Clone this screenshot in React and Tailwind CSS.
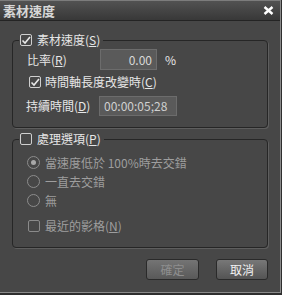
import React from 'react';

const Check = ({ checked, dim }) => (
  <span
    className={`flex h-[12px] w-[12px] shrink-0 items-center justify-center rounded-[2px] border ${
      dim ? 'border-[#8a8a8a]' : 'border-[#cfcfcf]'
    }`}
  >
    {checked && (
      <svg width="10" height="9" viewBox="0 0 10 9">
        <path d="M1.5 4.5 L4 7 L9 1" fill="none" stroke="#e8e8e8" strokeWidth="1.6" />
      </svg>
    )}
  </span>
);

const Radio = ({ selected }) => (
  <span className="flex h-[13px] w-[13px] shrink-0 items-center justify-center rounded-full border border-[#8c8c8c]">
    {selected && <span className="h-[5px] w-[5px] rounded-full bg-[#a8a8a8]" />}
  </span>
);

const Group = ({ legend, checked, children, className }) => (
  <fieldset
    className={`mx-[12px] rounded-[4px] border border-[#262626] p-0 shadow-[1px_1px_0_#5e5e5e] ${className}`}
  >
    <legend className="ml-[6px] flex h-[14px] items-center gap-[5px] px-[1px] text-[#e6e6e6]">
      <Check checked={checked} />
      <span className="pr-[2px]">{legend}</span>
    </legend>
    {children}
  </fieldset>
);

export default function App() {
  return (
    <div
      className="flex h-[295px] w-[282px] flex-col bg-[#2e2e2e] text-[12px] leading-[14px]"
      style={{ fontFamily: '"Noto Sans CJK TC", "Noto Sans", sans-serif' }}
    >
      <div className="flex h-[293px] w-[281px] flex-col border-r border-b border-[#8a8a8a] bg-[#474747]">
        <div className="flex h-[21px] items-center justify-between border-t border-b border-t-[#7c7c7c] border-b-[#242424] bg-gradient-to-b from-[#525252] to-[#383838] pl-[3px] pr-[6px]">
          <span className="text-[13px] font-bold text-[#d6d6d6]">素材速度</span>
          <svg width="11" height="9" viewBox="0 0 11 9">
            <path d="M1.5 1 L9.5 8 M9.5 1 L1.5 8" stroke="#ffffff" strokeWidth="2.4" />
          </svg>
        </div>

        <Group
          checked
          className="mt-[12px]"
          legend={
            <>
              素材速度(<u>S</u>)
            </>
          }
        >
          <div className="flex flex-col pb-[11px] pl-[14px] text-[#e6e6e6]">
            <div className="mt-[2px] flex items-center">
              <span className="w-[73px]">
                比率(<u>R</u>)
              </span>
              <div className="flex h-[21px] w-[57px] items-center justify-end border border-[#6c6c6c] bg-[#5a5a5a] pr-[4px] text-[#d8d8d8]">
                0.00
              </div>
              <span className="ml-[8px]">%</span>
            </div>
            <div className="mt-[6px] ml-[2px] flex h-[12px] items-center gap-[4px]">
              <Check checked />
              <span>
                時間軸長度改變時(<u>C</u>)
              </span>
            </div>
            <div className="mt-[8px] flex items-center">
              <span className="-ml-[1px] w-[73px]">
                持續時間(<u>D</u>)
              </span>
              <div className="flex h-[20px] w-[78px] items-center border border-[#6c6c6c] bg-[#5a5a5a] pl-[4px] text-[#d0d0d0]">
                00:00:05;28
              </div>
            </div>
          </div>
        </Group>

        <Group
          className="mt-[4px]"
          legend={
            <>
              處理選項(<u>P</u>)
            </>
          }
        >
          <div className="flex flex-col pt-[10px] pb-[15px] pl-[14px] text-[#9e9e9e]">
            <div className="flex h-[13px] items-center gap-[5px]">
              <Radio selected />
              <span>當速度低於 100%時去交錯</span>
            </div>
            <div className="mt-[6px] flex h-[13px] items-center gap-[5px]">
              <Radio />
              <span>一直去交錯</span>
            </div>
            <div className="mt-[6px] flex h-[13px] items-center gap-[5px]">
              <Radio />
              <span>無</span>
            </div>
            <div className="mt-[13px] ml-[1px] flex h-[12px] items-center gap-[5px]">
              <Check dim />
              <span>
                最近的影格(<u>N</u>)
              </span>
            </div>
          </div>
        </Group>

        <div className="mt-[11px] flex justify-end gap-[17px] pr-[12px]">
          <button className="flex h-[21px] w-[53px] items-center justify-center rounded-[3px] border border-[#2a2a2a] bg-gradient-to-b from-[#747474] to-[#595959] text-[#8e8e8e]">
            確定
          </button>
          <button className="flex h-[21px] w-[52px] items-center justify-center rounded-[3px] border border-[#2a2a2a] bg-gradient-to-b from-[#787878] to-[#545454] text-[#f2f2f2]">
            取消
          </button>
        </div>
      </div>
    </div>
  );
}
